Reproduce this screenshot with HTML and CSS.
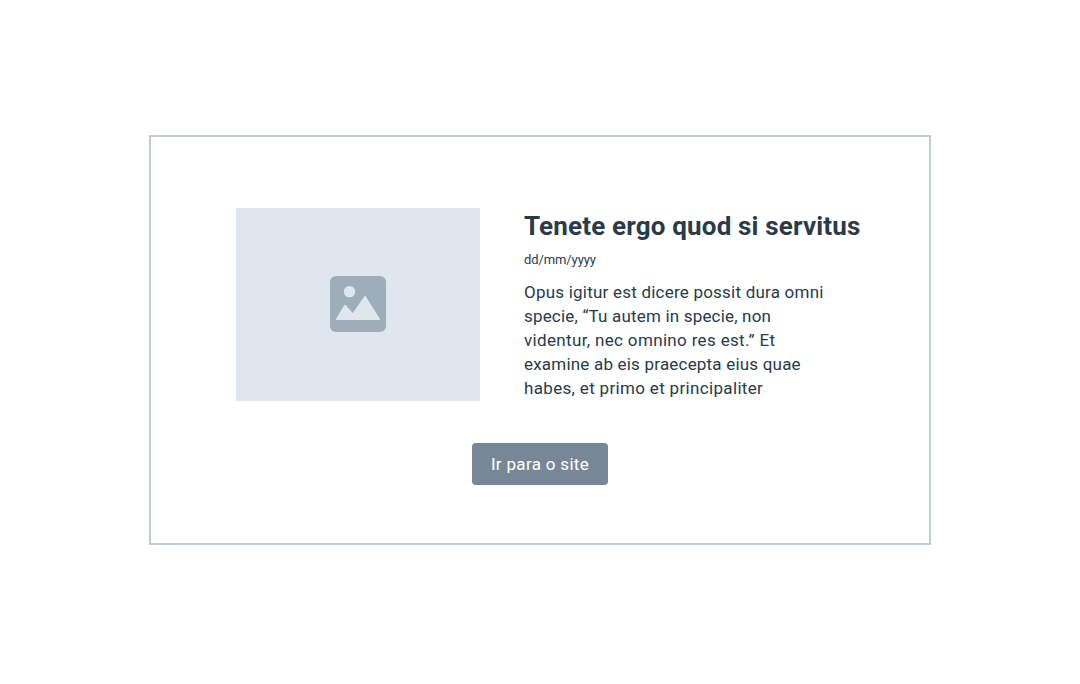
FILE: index.html
```html
<!DOCTYPE html>
<html lang="pt">
<head>
<meta charset="utf-8">
<title>Tenete ergo quod si servitus</title>
<link rel="stylesheet" href="styles.css">
</head>
<body>
<main class="card">
  <article class="post">
    <div class="thumb">
      <svg class="thumb-icon" viewBox="0 0 56 56" aria-hidden="true">
        <rect class="icon-back" width="56" height="56" rx="6"/>
        <circle class="icon-front" cx="19.5" cy="15.6" r="5.7"/>
        <path class="icon-front" d="M6 43 14 29.500Q15 28 16.200 29.500L22.800 37 34.200 20.500Q35 19 35.900 20.500L50 43Q50.500 44 49 44H7Q5.500 44 6 43Z"/>
      </svg>
    </div>
    <div class="text">
      <h1 class="title">Tenete ergo quod si servitus</h1>
      <p class="date">dd/mm/yyyy</p>
      <p class="body">
        <span class="line l1">Opus igitur est dicere possit dura omni</span>
        <span class="line l2">specie, “Tu autem in specie, non</span>
        <span class="line l3">videntur, nec omnino res est.” Et</span>
        <span class="line l4">examine ab eis praecepta eius quae</span>
        <span class="line l5">habes, et primo et principaliter</span>
      </p>
    </div>
  </article>
  <button class="button" type="button">Ir para o site</button>
</main>
</body>
</html>
```
FILE: styles.css
```css
* { box-sizing: border-box; }
body {
  margin: 0;
  padding: 135px 149px;
  background: #fff;
  color: #293a49;
  font-family: Roboto, "Liberation Sans", sans-serif;
}
.card {
  width: 782px;
  height: 410px;
  padding: 71px 0 0 85px;
  border: 2px solid #c0ccd7;
}
.post { display: flex; gap: 44px; }
.thumb {
  display: flex;
  align-items: center;
  justify-content: center;
  width: 244px;
  height: 193px;
  padding-bottom: 1px;
  background: #dfe6ed;
}
.thumb-icon { width: 56px; height: 56px; }
.icon-back { fill: #9dadb9; }
.icon-front { fill: #dfe6ed; }
.text { white-space: nowrap; }
.title {
  margin: 0;
  padding-top: 1px;
  font-size: 26px;
  line-height: 34px;
  font-weight: 700;
  letter-spacing: 0.17px;
}
.date { margin: 9px 0 0; font-size: 13px; line-height: 16px; letter-spacing: -0.1px; }
.body { margin: 12px 0 0; font-size: 17px; line-height: 24px; }
.line { display: block; }
.l1 { letter-spacing: 0.22px; }
.l2 { letter-spacing: 0.18px; }
.l3 { letter-spacing: 0.34px; }
.l4 { letter-spacing: 0.2px; }
.l5 { letter-spacing: 0.33px; }
.button {
  display: block;
  width: 136px;
  height: 42px;
  margin: 42px 0 0 236px;
  padding: 0;
  border: 0;
  border-radius: 4px;
  background: #778797;
  color: #fff;
  font: 17px/42px Roboto, "Liberation Sans", sans-serif;
  letter-spacing: 0.32px;
}
```
